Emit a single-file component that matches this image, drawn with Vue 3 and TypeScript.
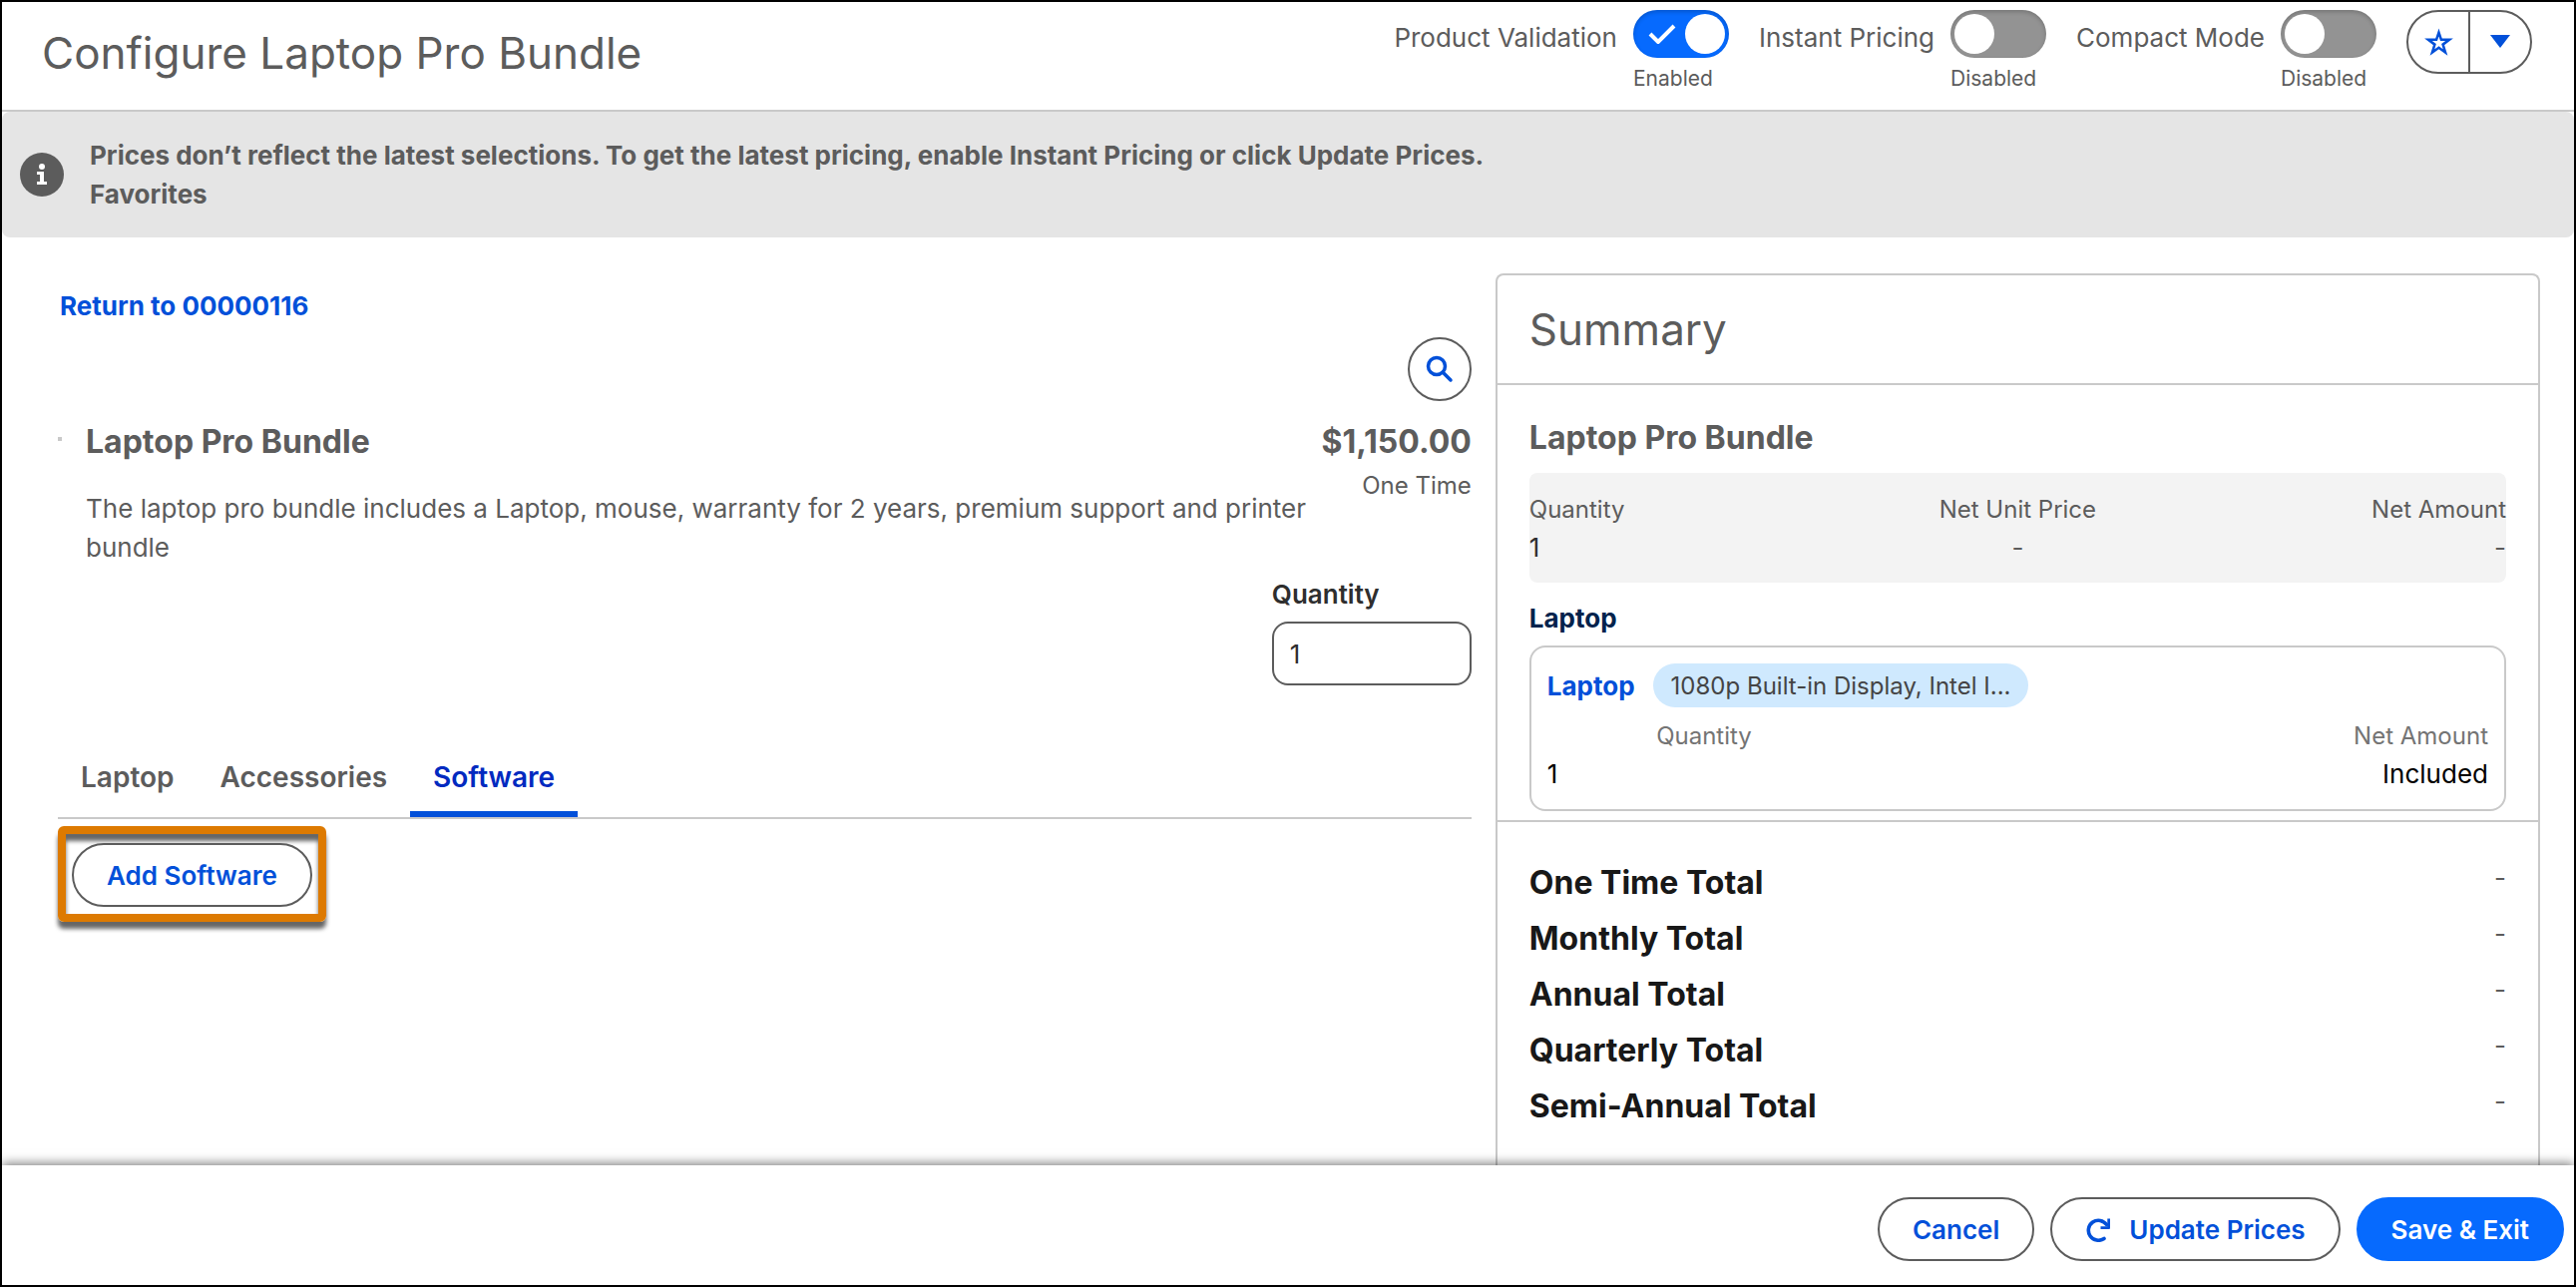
<script setup lang="ts">
import { ref } from 'vue'

interface Setting {
  id: string
  label: string
  on: boolean
}

const settings = ref<Setting[]>([
  { id: 'validation', label: 'Product Validation', on: true },
  { id: 'instant', label: 'Instant Pricing', on: false },
  { id: 'compact', label: 'Compact Mode', on: false },
])

const tabs: string[] = ['Laptop', 'Accessories', 'Software']
const activeTab = ref('Software')
const quantity = ref('1')
const totals: string[] = [
  'One Time Total',
  'Monthly Total',
  'Annual Total',
  'Quarterly Total',
  'Semi-Annual Total',
]
</script>

<template>
  <div class="page">
    <header class="header">
      <h1 class="title">Configure Laptop Pro Bundle</h1>
      <div class="settings">
        <div v-for="s in settings" :key="s.id" class="setting">
          <label class="setting-label" :for="s.id">{{ s.label }}</label>
          <div class="setting-control">
            <span class="toggle">
              <input :id="s.id" v-model="s.on" type="checkbox" role="switch" />
              <svg v-if="s.on" class="toggle-check" viewBox="0 0 28 20" aria-hidden="true">
                <path d="M2 10l8 8L26 2" />
              </svg>
            </span>
            <span class="setting-state">{{ s.on ? 'Enabled' : 'Disabled' }}</span>
          </div>
        </div>
        <div class="favorites">
          <button type="button" aria-label="Add to favorites">
            <svg class="star" viewBox="0 0 28 28" aria-hidden="true">
              <path d="M14 5l2.200 6.600h7.300l-5.800 4.300 2.200 7.100-5.900-4.300-5.900 4.300 2.200-7.100-5.800-4.300h7.300z" />
            </svg>
          </button>
          <button type="button" aria-label="Favorites list">
            <svg class="arrow" viewBox="0 0 20 14" aria-hidden="true">
              <path d="M0 0h20L10 13z" />
            </svg>
          </button>
        </div>
      </div>
    </header>

    <div class="banner" role="status">
      <svg class="info" viewBox="0 0 44 44" aria-hidden="true">
        <circle cx="22" cy="22" r="22" fill="#5c5c5c" />
        <circle cx="22" cy="14" r="3" fill="#fff" />
        <path d="M17 19h7v10h3v3H17v-3h3v-7h-3z" fill="#fff" />
      </svg>
      <p>
        Prices don’t reflect the latest selections. To get the latest pricing, enable Instant
        Pricing or click Update Prices.<br />Favorites
      </p>
    </div>

    <main class="main">
      <section class="config">
        <a class="return" href="#">Return to 00000116</a>
        <button class="search" type="button" aria-label="Search products">
          <svg viewBox="0 0 28 28" aria-hidden="true">
            <circle cx="11" cy="11" r="8.500" />
            <path d="M17.500 17.500L25 25" />
          </svg>
        </button>

        <div class="product">
          <span class="thumb"></span>
          <div class="product-text">
            <h2>Laptop Pro Bundle</h2>
            <p>
              The laptop pro bundle includes a Laptop, mouse, warranty for 2 years, premium support
              and printer bundle
            </p>
          </div>
          <div class="price">
            <strong>$1,150.00</strong>
            <span>One Time</span>
          </div>
        </div>

        <div class="quantity">
          <label for="quantity">Quantity</label>
          <input id="quantity" v-model="quantity" type="text" inputmode="numeric" />
        </div>

        <div class="tabs" role="tablist">
          <button
            v-for="t in tabs"
            :key="t"
            type="button"
            role="tab"
            :aria-selected="t === activeTab"
            :class="{ active: t === activeTab }"
            @click="activeTab = t"
          >
            {{ t }}
          </button>
        </div>

        <div class="callout">
          <button class="btn" type="button">Add Software</button>
        </div>
      </section>

      <aside class="summary">
        <h2 class="summary-title">Summary</h2>
        <div class="summary-body">
          <h3>Laptop Pro Bundle</h3>
          <dl class="bundle">
            <div>
              <dt>Quantity</dt>
              <dd class="dark">1</dd>
            </div>
            <div>
              <dt>Net Unit Price</dt>
              <dd>-</dd>
            </div>
            <div>
              <dt>Net Amount</dt>
              <dd>-</dd>
            </div>
          </dl>
          <h4>Laptop</h4>
          <div class="item">
            <div class="item-head">
              <a href="#">Laptop</a>
              <span class="pill">1080p Built-in Display, Intel I...</span>
            </div>
            <dl>
              <div>
                <dt>Quantity</dt>
                <dd>1</dd>
              </div>
              <div>
                <dt>Net Amount</dt>
                <dd>Included</dd>
              </div>
            </dl>
          </div>
        </div>
        <dl class="totals">
          <div v-for="t in totals" :key="t">
            <dt>{{ t }}</dt>
            <dd>-</dd>
          </div>
        </dl>
      </aside>
    </main>

    <footer class="footer">
      <button class="btn" type="button">Cancel</button>
      <button class="btn" type="button">
        <svg class="refresh" viewBox="0 0 26 26" aria-hidden="true">
          <path class="arc" d="M19 22.500A10 10 0 1 1 21.500 8.500" />
          <path class="head" d="M22.300 2.500H25V12q0 1-1 1h-8.500v-2.800h6.800z" />
        </svg>
        Update Prices
      </button>
      <button class="btn primary" type="button">Save &amp; Exit</button>
    </footer>
  </div>
</template>

<style>
body {
  margin: 0;
  background: #fff;
}
</style>

<style scoped>
.page {
  box-sizing: border-box;
  min-height: 100vh;
  display: flex;
  flex-direction: column;
  border: 2px solid #000;
  background: #fff;
  color: #5c5c5c;
  font-family: Inter, 'Liberation Sans', sans-serif;
  font-size: 26px;
  line-height: 39px;
}

.page *,
.page *::before {
  box-sizing: border-box;
}

h1,
h2,
h3,
h4,
p,
dl,
dd {
  margin: 0;
}

button,
input {
  font: inherit;
}

a {
  color: #0250d9;
  font-weight: 700;
  text-decoration: none;
}

/* Header */
.header {
  display: flex;
  justify-content: space-between;
  align-items: flex-start;
  height: 110px;
  padding: 8px 42px 0 40px;
  border-bottom: 2px solid #c9c9c9;
}

.title {
  margin-top: 16px;
  font-size: 44px;
  font-weight: 400;
  line-height: 54px;
}

.settings {
  display: flex;
  gap: 30px;
}

.setting {
  display: flex;
  gap: 16px;
}

.setting-label {
  margin-top: 8px;
  font-size: 26px;
}

.setting-control {
  display: flex;
  flex-direction: column;
  width: 96px;
}

.toggle {
  position: relative;
  height: 48px;
}

.toggle input {
  appearance: none;
  display: block;
  width: 96px;
  height: 48px;
  margin: 0;
  padding: 4px;
  border-radius: 24px;
  background: #939393;
  box-shadow: inset 0 2px 4px rgba(0, 0, 0, 0.2);
}

.toggle input::before {
  content: '';
  display: block;
  width: 40px;
  height: 40px;
  border-radius: 50%;
  background: #fff;
}

.toggle input:checked {
  background: #066afe;
}

.toggle input:checked::before {
  margin-left: auto;
}

.toggle-check {
  position: absolute;
  left: 15px;
  top: 14px;
  width: 28px;
  height: 20px;
  fill: none;
  stroke: #fff;
  stroke-width: 4;
  pointer-events: none;
}

.setting-state {
  margin-top: 6px;
  font-size: 21px;
  line-height: 30px;
}

.favorites {
  display: flex;
  width: 126px;
  height: 64px;
  border: 2px solid #5c5c5c;
  border-radius: 32px;
}

.favorites button {
  flex: 1;
  display: flex;
  align-items: center;
  justify-content: center;
  padding: 0;
  border: 0;
  background: none;
}

.favorites button + button {
  border-left: 2px solid #5c5c5c;
}

.star {
  width: 31px;
  height: 31px;
  fill: none;
  stroke: #0250d9;
  stroke-width: 2.3;
}

.arrow {
  width: 20px;
  height: 14px;
  fill: #0250d9;
}

/* Banner */
.banner {
  display: flex;
  align-items: center;
  gap: 26px;
  min-height: 126px;
  padding: 0 18px;
  border-radius: 8px;
  background: #e5e5e5;
  font-weight: 700;
}

.info {
  flex: none;
  width: 44px;
  height: 44px;
}

/* Main columns */
.main {
  flex: 1;
  display: grid;
  grid-template-columns: 23fr 17fr;
  gap: 24px;
  padding: 36px 34px 0 56px;
}

.config {
  display: flex;
  flex-direction: column;
  align-items: stretch;
  padding-top: 13px;
}

.return {
  align-self: flex-start;
  margin-left: 2px;
  line-height: 40px;
}

.search {
  align-self: flex-end;
  display: flex;
  align-items: center;
  justify-content: center;
  width: 64px;
  height: 64px;
  margin-top: 11px;
  padding: 0;
  border: 2px solid #5c5c5c;
  border-radius: 50%;
  background: #fff;
}

.search svg {
  width: 28px;
  height: 28px;
  fill: none;
  stroke: #0250d9;
  stroke-width: 3.5;
  stroke-linecap: round;
}

.product {
  display: flex;
  margin-top: 21px;
}

.thumb {
  flex: none;
  width: 4px;
  height: 4px;
  margin: 15px 24px 0 0;
  background: #c9c9c9;
}

.product-text {
  flex: 1;
}

.product-text h2,
.price strong,
.summary h3 {
  font-size: 32px;
  font-weight: 700;
  line-height: 40px;
}

.product-text p {
  margin-top: 27px;
}

.price {
  display: flex;
  flex-direction: column;
  align-items: flex-end;
  gap: 6px;
  margin-left: 8px;
}

.price span {
  font-size: 24px;
  line-height: 36px;
}

.quantity {
  align-self: flex-end;
  display: flex;
  flex-direction: column;
  gap: 8px;
  width: 200px;
  margin-top: 8px;
  color: #2e2e2e;
}

.quantity label {
  font-weight: 600;
}

.quantity input {
  width: 100%;
  height: 64px;
  padding: 0 16px;
  border: 2px solid #5c5c5c;
  border-radius: 16px;
  background: #fff;
  color: #2e2e2e;
}

.tabs {
  display: flex;
  margin-top: 52px;
  border-bottom: 2px solid #c9c9c9;
}

.tabs button {
  height: 80px;
  padding: 6px 23px 0;
  border: 0;
  border-bottom: 6px solid transparent;
  background: none;
  color: #5c5c5c;
  font-size: 28px;
  font-weight: 600;
}

.tabs .active {
  border-bottom-color: #0250d9;
  color: #022ac0;
}

.callout {
  align-self: flex-start;
  margin-top: 7px;
  padding: 9px 6px 7px;
  border: 8px solid #dd7a01;
  border-radius: 6px;
  box-shadow:
    0 7px 4px rgba(0, 0, 0, 0.6),
    inset 0 7px 4px rgba(0, 0, 0, 0.6);
}

.btn {
  display: flex;
  align-items: center;
  height: 64px;
  padding: 0 33px;
  border: 2px solid #5c5c5c;
  border-radius: 32px;
  background: #fff;
  color: #0250d9;
  font-weight: 600;
  white-space: nowrap;
}

.primary {
  border-color: #066afe;
  background: #066afe;
  color: #fff;
}

/* Summary */
.summary {
  border: 2px solid #c9c9c9;
  border-bottom: 0;
  border-radius: 8px 8px 0 0;
}

.summary-title {
  padding: 0 32px;
  border-bottom: 2px solid #c9c9c9;
  font-size: 44px;
  font-weight: 400;
  line-height: 108px;
}

.summary-body {
  padding: 33px 32px 9px;
  border-bottom: 2px solid #c9c9c9;
}

.summary dt {
  font-size: 24px;
  line-height: 36px;
}

.summary dd {
  line-height: 40px;
}

.bundle {
  display: grid;
  grid-template-columns: repeat(3, 1fr);
  margin-top: 15px;
  padding: 19px 0 15px;
  border-radius: 8px;
  background: #f3f3f3;
}

.bundle > :nth-child(2) {
  text-align: center;
}

.bundle > :nth-child(3) {
  text-align: right;
}

.dark {
  color: #2e2e2e;
}

.summary h4 {
  margin-top: 16px;
  color: #03234d;
  font-size: 26px;
  font-weight: 700;
}

.item {
  margin-top: 8px;
  padding: 16px 16px 15px;
  border: 2px solid #c9c9c9;
  border-radius: 16px;
}

.item-head {
  display: flex;
  align-items: center;
  gap: 18px;
}

.pill {
  padding: 1px 18px 0;
  border-radius: 22px;
  background: #cfe9fe;
  color: #444;
  font-size: 24px;
  line-height: 43px;
}

.item dl {
  display: grid;
  grid-template-columns: 1fr 2fr;
  margin-top: 11px;
}

.item dt {
  color: #747474;
}

.item dd {
  color: #000;
}

.item dl > :first-child dt {
  text-align: center;
}

.item dl > :last-child {
  text-align: right;
}

.totals {
  padding: 33px 32px 0;
}

.totals div {
  display: flex;
  justify-content: space-between;
  height: 56px;
}

.totals dt {
  color: #181818;
  font-size: 32px;
  font-weight: 700;
  line-height: 56px;
}

.totals dd {
  line-height: 46px;
}

/* Footer */
.footer {
  position: relative;
  display: flex;
  justify-content: flex-end;
  gap: 16px;
  padding: 32px 10px 24px;
  background: #fff;
  box-shadow: 0 -2px 10px rgba(0, 0, 0, 0.5);
}

.refresh {
  width: 26px;
  height: 26px;
  margin-right: 18px;
}

.refresh .arc {
  fill: none;
  stroke: #0250d9;
  stroke-width: 3.6;
  stroke-linecap: round;
}

.refresh .head {
  fill: #0250d9;
}
</style>
